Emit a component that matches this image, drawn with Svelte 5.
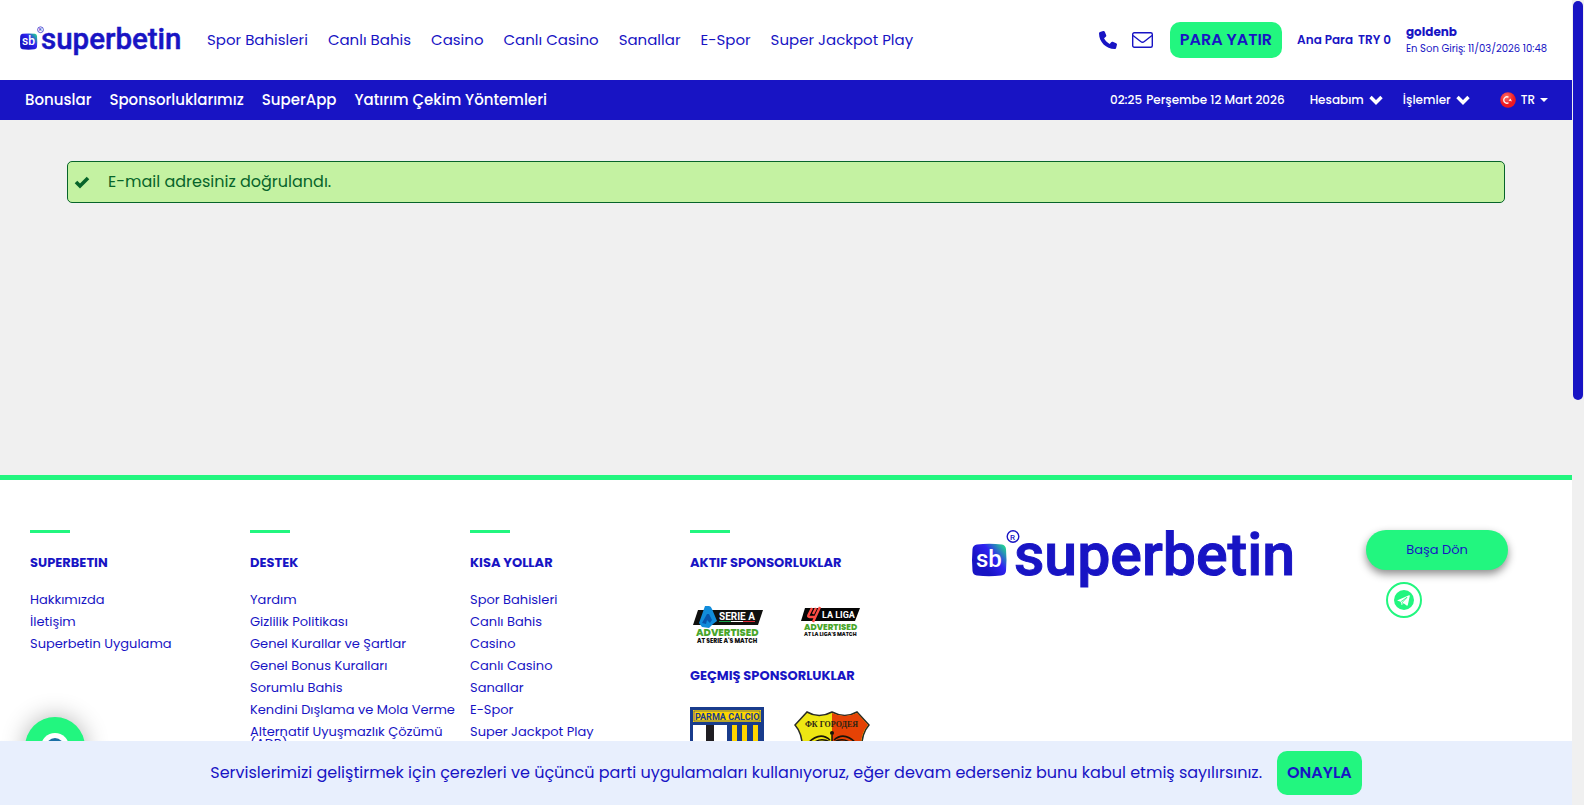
<script lang="ts">
    const mainLinks = ['Spor Bahisleri', 'Canlı Bahis', 'Casino', 'Canlı Casino', 'Sanallar', 'E-Spor', 'Super Jackpot Play'];
    const subLinks = ['Bonuslar', 'Sponsorluklarımız', 'SuperApp', 'Yatırım Çekim Yöntemleri'];
    const footerColumns = [
        { title: 'SUPERBETIN', links: ['Hakkımızda', 'İletişim', 'Superbetin Uygulama'] },
        {
            title: 'DESTEK',
            links: [
                'Yardım',
                'Gizlilik Politikası',
                'Genel Kurallar ve Şartlar',
                'Genel Bonus Kuralları',
                'Sorumlu Bahis',
                'Kendini Dışlama ve Mola Verme',
                'Alternatif Uyuşmazlık Çözümü (ADR)'
            ]
        },
        { title: 'KISA YOLLAR', links: mainLinks }
    ];

    let cookieVisible = $state(true);
    let page: HTMLDivElement;
</script>

{#snippet logo()}
    <svg class="logo" viewBox="0 0 320 66" role="img" aria-label="superbetin">
        <defs>
            <linearGradient id="badge" x1="0.25" y1="0.6" x2="1" y2="0">
                <stop offset="0" stop-color="#1814c4" />
                <stop offset="0.45" stop-color="#2f22f2" />
                <stop offset="1" stop-color="#22f67f" />
            </linearGradient>
        </defs>
        <path d="M5 19.500Q17 18 30 19.500Q33.500 20 34 24Q35 35 34 46Q33.500 50 29 50.500Q17 52 5 50.500Q1 50 .5 46Q-.5 35 .5 24Q1 20 5 19.500Z" fill="url(#badge)" />
        <text class="logo-text" x="4" y="42" font-size="24" fill="#fff">sb</text>
        <circle cx="41" cy="11.500" r="5.800" fill="none" stroke="#1814c4" stroke-width="1.400" />
        <text class="logo-text" x="38" y="14.500" font-size="8" fill="#1814c4">R</text>
        <text class="logo-text" x="42" y="50" font-size="59" fill="#1814c4" stroke="#1814c4" stroke-width="1">superbetin</text>
    </svg>
{/snippet}

{#snippet chevron()}
    <svg class="chevron" viewBox="0 0 14 10"><path d="M1.500 2L7 7.500 12.500 2" fill="none" stroke="#fff" stroke-width="3.400" /></svg>
{/snippet}

<div class="shell">
    <div class="page" bind:this={page}>
        <header class="top">
            <a class="brand" href="#home">{@render logo()}</a>
            <nav class="main-nav">
                {#each mainLinks as link}
                    <a href="#nav">{link}</a>
                {/each}
            </nav>
            <div class="account">
                <a class="icon" href="#phone" aria-label="Telefon">
                    <svg width="18" height="18" viewBox="0 0 512 512"><path fill="#1814c4" d="M164.900 24.600c-7.700-18.600-28-28.500-47.400-23.200l-88 24C12.100 30.200 0 46 0 64c0 247.400 200.600 448 448 448 18 0 33.800-12.100 38.600-29.500l24-88c5.300-19.400-4.600-39.700-23.200-47.400l-96-40c-16.300-6.800-35.200-2.100-46.300 11.600L304.700 368C234.300 334.700 177.300 277.700 144 207.300L193.300 167c13.700-11.200 18.400-30 11.600-46.300l-40-96z" /></svg>
                </a>
                <a class="icon" href="#mail" aria-label="Mesajlar">
                    <svg width="21" height="16" viewBox="0 0 21 16" fill="none" stroke="#1814c4" stroke-width="1.400"><rect x=".7" y=".7" width="19.600" height="14.600" rx="1.500" /><path d="M1 3.500l7.700 6q1.800 1.400 3.600 0L20 3.500" /></svg>
                </a>
                <button class="action deposit">PARA YATIR</button>
                <div class="balance"><span>Ana Para</span><span>TRY 0</span></div>
                <div class="user">
                    <strong>goldenb</strong>
                    <span>En Son Giriş: 11/03/2026 10:48</span>
                </div>
            </div>
        </header>

        <div class="sub">
            <nav class="sub-nav">
                {#each subLinks as link}
                    <a href="#sub">{link}</a>
                {/each}
            </nav>
            <div class="tools">
                <time><span>02:25</span><span>Perşembe 12 Mart 2026</span></time>
                <button>Hesabım {@render chevron()}</button>
                <button>İşlemler {@render chevron()}</button>
                <button class="language">
                    <svg width="16" height="16" viewBox="0 0 16 16"><defs><radialGradient id="flag" cx=".4" cy=".3"><stop offset="0" stop-color="#ff7068" /><stop offset="1" stop-color="#f01820" /></radialGradient></defs><circle cx="8" cy="8" r="7.800" fill="url(#flag)" /><path d="M8.500 5.200a3.200 3.200 0 1 0 0 5.600" fill="none" stroke="#fff" stroke-width="1.300" /><path d="M8.500 9l1.800-2.500L12 9.500l-1.700-.7z" fill="#fff" /></svg>
                    TR
                    <svg width="8" height="4" viewBox="0 0 8 4"><path d="M0 0h8L4 4z" fill="#fff" /></svg>
                </button>
            </div>
        </div>

        <main>
            <div class="alert" role="status">
                <svg width="16" height="14" viewBox="0 0 16 14"><path d="M2 7l4 4 8-8" fill="none" stroke="#07642a" stroke-width="3.600" /></svg>
                <span>E-mail adresiniz doğrulandı.</span>
            </div>
        </main>

        <footer>
            {#each footerColumns as column}
                <section>
                    <h2>{column.title}</h2>
                    <ul>
                        {#each column.links as link}
                            <li><a href="#footer">{link}</a></li>
                        {/each}
                    </ul>
                </section>
            {/each}
            <section>
                <h2>AKTIF SPONSORLUKLAR</h2>
                <div class="sponsors active">
                    <svg width="74" height="40" viewBox="0 0 74 40" role="img" aria-label="Serie A">
                        <path d="M8 5h65l-5 15H3z" fill="#10100e" />
                        <path d="M15 1h4q2 0 3 3l5 12-4 3-4 4-7-1-3-4z" fill="#118cdb" />
                        <path d="M17 9l-5 9 4 1 1-4 3 3 2-3-3-6z" fill="#0755ac" />
                        <text x="29" y="15" font-family="Roboto" font-size="10" font-weight="700" fill="#fff">SERIE A</text>
                        <path d="M29 16.500h12" stroke="#16a34a" /><path d="M41 16.500h12" stroke="#fff" /><path d="M53 16.500h12" stroke="#e22b35" />
                        <text x="6" y="31" font-family="Poppins" font-size="10" font-weight="800" fill="#49a62b">ADVERTISED</text>
                        <text x="7" y="38" font-family="Poppins" font-size="6" font-weight="800" fill="#111">AT SERIE A'S MATCH</text>
                    </svg>
                    <svg width="60" height="40" viewBox="0 0 60 40" role="img" aria-label="La Liga">
                        <path d="M4 3h55l-5 13H0z" fill="#050505" />
                        <path d="M11 3L7.500 10q-1 2 1 2h6M19 2l-7 15M15 3l-3 6" fill="none" stroke="#ff4b44" stroke-width="2.400" />
                        <text x="21" y="13" font-family="Roboto" font-size="9" font-weight="700" fill="#fff">LA LIGA</text>
                        <text x="3" y="25" font-family="Poppins" font-size="8.500" font-weight="800" fill="#49a62b">ADVERTISED</text>
                        <text x="3" y="31" font-family="Poppins" font-size="5.200" font-weight="800" fill="#111">AT LA LIGA'S MATCH</text>
                    </svg>
                </div>
                <h3>GEÇMIŞ SPONSORLUKLAR</h3>
                <div class="sponsors past">
                    <svg width="74" height="86" viewBox="0 0 74 86" role="img" aria-label="Parma Calcio">
                        <path d="M0 0h74v60q-6 18-37 26Q6 78 0 60z" fill="#193c8c" />
                        <path d="M3 3h68v12H3z" fill="#ffd500" /><path d="M4 4h66v10H4z" fill="none" stroke="#193c8c" stroke-width=".6" />
                        <text x="5" y="12.500" font-family="Roboto" font-size="9" font-weight="700" fill="#193c8c">PARMA CALCIO</text>
                        <path d="M3 18h34v60Q9 70 3 58z" fill="#fff" /><path d="M16 18h8v57l-8-4z" fill="#201e22" />
                        <path d="M42 18h5v60h-5zM52 18h5v55h-5zM63 18h5v47h-5z" fill="#ffd500" />
                    </svg>
                    <svg width="76" height="82" viewBox="0 0 76 82" role="img" aria-label="ФК Городея">
                        <path d="M13 1q12 7 25 0 13 7 25 0l12 13q-9 10-7 30-4 25-30 37Q12 69 8 44 10 24 1 14z" fill="#eee613" stroke="#292b25" stroke-width="1.500" />
                        <path d="M38 2q13 6 25 0l11 12q-9 10-7 30-4 24-29 36z" fill="#e54205" />
                        <text x="11" y="16" font-family="Liberation Serif" font-size="8" font-weight="700" fill="#292414">ФК ГОРОДЕЯ</text>
                        <path d="M38 24v50M36 29Q26 20 14 32M36 31Q25 25 16 35M36 33Q26 29 19 38M40 29Q50 20 62 32M40 31Q51 25 60 35M40 33Q50 29 57 38" fill="none" stroke="#171409" stroke-width="1.500" /><circle cx="38" cy="22" r="2" fill="#171409" />
                    </svg>
                </div>
            </section>
            <div class="footer-logo">{@render logo()}</div>
            <div class="footer-side">
                <button class="back" onclick={() => page.scrollTo(0, 0)}>Başa Dön</button>
                <a class="telegram" href="#telegram" aria-label="Telegram">
                    <svg width="20" height="20" viewBox="0 0 20 20"><circle cx="10" cy="10" r="10" fill="#22f67f" /><path d="M3.500 10.200L15 5.200q1-.3.8.8l-2 9q-.3 1-1.200.5l-3-2.200-1.500 1.500q-.6.4-.7-.4l-.7-2.700-3-.9q-.8-.2-.2-.6z" fill="#fff" /><path d="M7 11.600l6-4.300-4.500 4.900-.5 2" fill="none" stroke="#22f67f" stroke-width=".8" /></svg>
                </a>
            </div>
        </footer>

        <button class="chat" aria-label="Canlı destek">
            <svg width="60" height="60" viewBox="0 0 60 60"><circle cx="30" cy="30" r="14" fill="#fff" /><circle cx="30" cy="30" r="9" fill="#1a6fa5" /></svg>
        </button>
        {#if cookieVisible}
            <div class="cookie">
                <p>Servislerimizi geliştirmek için çerezleri ve üçüncü parti uygulamaları kullanıyoruz, eğer devam ederseniz bunu kabul etmiş sayılırsınız.</p>
                <button class="action" onclick={() => (cookieVisible = false)}>ONAYLA</button>
            </div>
        {/if}
    </div>
    <div class="rail"><div class="thumb"></div></div>
</div>

<style>
    :global(body) {
        background: #f0f0f0;
        font-family: Poppins, Inter, sans-serif;
        color: #1814c4;
    }
    a {
        color: inherit;
        text-decoration: none;
    }
    button {
        border: 0;
        padding: 0;
        background: none;
        color: inherit;
        font: inherit;
        cursor: pointer;
    }
    svg {
        display: block;
        flex-shrink: 0;
    }
    .shell {
        display: flex;
        height: 100vh;
        overflow: hidden;
    }
    .page {
        position: relative;
        flex: 1;
        min-width: 0;
        overflow: hidden;
    }
    .rail {
        width: 10px;
        padding: 1px 1px 0;
        background: #f0f0f0;
    }
    .thumb {
        height: calc(50% - 3px);
        border-radius: 5px;
        background: #1814c4;
    }
    .logo {
        width: 100%;
        overflow: visible;
    }
    .logo-text {
        font-family: Roboto, sans-serif;
        font-weight: 500;
    }
    .top {
        display: flex;
        align-items: center;
        height: 80px;
        padding: 0 25px 0 20px;
        background: #fff;
        box-sizing: border-box;
        white-space: nowrap;
    }
    .brand {
        width: 160px;
        margin-right: 27px;
    }
    .main-nav {
        display: flex;
        gap: 20px;
        padding-bottom: 2px;
        font-size: 15px;
    }
    .account {
        display: flex;
        align-items: center;
        gap: 15px;
        margin-left: auto;
    }
    .action {
        padding: 0 10px 2px;
        border-radius: 10px;
        background: #22f67f;
        font-size: 16px;
        font-weight: 600;
    }
    .deposit {
        height: 36px;
        margin-left: 2px;
    }
    .balance {
        display: flex;
        gap: 5px;
        font-size: 12px;
        font-weight: 600;
    }
    .user {
        display: flex;
        flex-direction: column;
        font-size: 10px;
        line-height: 17px;
    }
    .user strong {
        font-size: 12px;
    }
    .sub {
        display: flex;
        align-items: center;
        justify-content: space-between;
        height: 40px;
        padding: 0 24px 0 25px;
        background: #1814c4;
        color: #fff;
        font-weight: 500;
        white-space: nowrap;
    }
    .sub-nav {
        display: flex;
        gap: 18px;
        padding-bottom: 2px;
        font-size: 15px;
    }
    .tools {
        display: flex;
        align-items: center;
        gap: 20px;
        font-size: 12px;
    }
    .tools time {
        display: flex;
        gap: 4px;
        margin-right: 5px;
    }
    .tools button {
        display: flex;
        align-items: center;
        gap: 5px;
    }
    .tools .language {
        margin-left: 10px;
    }
    .chevron {
        width: 14px;
        height: 10px;
    }
    main {
        min-height: 355px;
        padding: 41px 67px 0;
        box-sizing: border-box;
    }
    .alert {
        display: flex;
        align-items: center;
        gap: 18px;
        height: 40px;
        padding: 0 6px;
        border: 1px solid #07642a;
        border-radius: 5px;
        background: #c4f2a2;
        color: #07642a;
        font-size: 16px;
    }
    .alert span {
        padding-bottom: 2px;
    }
    footer {
        display: grid;
        grid-template-columns: 220fr 220fr 220fr 282fr 394fr 176fr;
        padding: 50px 30px;
        border-top: 5px solid #22f67f;
        background: #fff;
        font-size: 13px;
    }
    h2,
    h3 {
        margin: 0;
        font-size: 13px;
        font-weight: 700;
        line-height: 20px;
    }
    h2::before {
        content: '';
        display: block;
        width: 40px;
        height: 3px;
        margin-bottom: 20px;
        background: #22f67f;
    }
    ul {
        margin: 21px 0 0;
        padding: 0;
        list-style: none;
    }
    li {
        margin-bottom: 10px;
        padding-right: 10px;
        line-height: 12px;
    }
    .sponsors {
        display: flex;
        align-items: flex-end;
    }
    .sponsors.active {
        gap: 37px;
        margin: 32px 0 21px;
    }
    .sponsors.past {
        gap: 30px;
        margin-top: 21px;
    }
    .footer-logo {
        width: 320px;
        margin-top: -5px;
    }
    .footer-side {
        display: flex;
        flex-direction: column;
        align-items: flex-start;
        gap: 12px;
    }
    .back {
        width: 142px;
        height: 40px;
        border-radius: 20px;
        background: #22f67f;
        box-shadow: 0 4px 8px rgba(0, 0, 0, 0.45);
    }
    .telegram {
        display: grid;
        place-items: center;
        width: 32px;
        height: 32px;
        margin-left: 20px;
        border: 2px solid #22f67f;
        border-radius: 50%;
    }
    .chat {
        position: absolute;
        left: 25px;
        bottom: 28px;
        border-radius: 50%;
        background: #22f67f;
        box-shadow: 0 0 24px rgba(0, 0, 0, 0.3);
    }
    .cookie {
        position: absolute;
        left: 0;
        right: 0;
        bottom: 0;
        display: flex;
        align-items: center;
        justify-content: center;
        gap: 15px;
        height: 64px;
        background: #e8effd;
    }
    .cookie p {
        margin: 0;
        padding-bottom: 2px;
        font-size: 16px;
    }
    .cookie .action {
        height: 44px;
    }
</style>
